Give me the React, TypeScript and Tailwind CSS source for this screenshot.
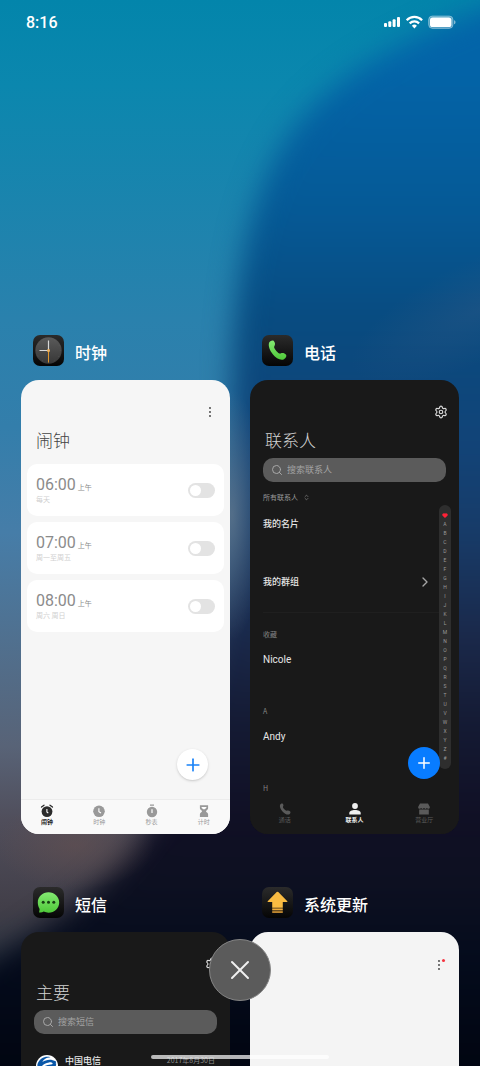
import React from 'react';
import { ChevronRight, ChevronsUpDown, Plus, Search, Settings, X } from 'lucide-react';

interface Alarm {
  time: string;
  repeat: string;
}

const alarms: Alarm[] = [
  { time: '06:00', repeat: '每天' },
  { time: '07:00', repeat: '周一至周五' },
  { time: '08:00', repeat: '周六 周日' },
];

const contactGroups = [
  { title: '收藏', names: ['Nicole'] },
  { title: 'A', names: ['Andy'] },
  { title: 'H', names: [] },
];

const letters = 'ABCDEFGHIJKLMNOPQRSTUVWXYZ#'.split('');

const Wallpaper = () => (
  <svg
    className="absolute inset-0 h-full w-full"
    viewBox="0 0 480 1066"
    preserveAspectRatio="none"
    aria-hidden="true"
  >
    <defs>
      <linearGradient id="sky" gradientUnits="userSpaceOnUse" x1="0" y1="0" x2="0" y2="1066">
        <stop offset="0" stopColor="#0385ab" />
        <stop offset="0.08" stopColor="#0b87ae" />
        <stop offset="0.3" stopColor="#2a81ad" />
        <stop offset="0.4" stopColor="#337eab" />
        <stop offset="0.5" stopColor="#467da8" />
        <stop offset="0.6" stopColor="#50708f" />
        <stop offset="0.7" stopColor="#586377" />
        <stop offset="0.77" stopColor="#504e5b" />
        <stop offset="0.85" stopColor="#423f49" />
        <stop offset="0.9" stopColor="#2f3643" />
        <stop offset="1" stopColor="#111827" />
      </linearGradient>
      <linearGradient id="deep" gradientUnits="userSpaceOnUse" x1="0" y1="0" x2="0" y2="1066">
        <stop offset="0.06" stopColor="#0364a8" />
        <stop offset="0.19" stopColor="#055a97" />
        <stop offset="0.3" stopColor="#084b80" />
        <stop offset="0.42" stopColor="#124377" />
        <stop offset="0.5" stopColor="#173b68" />
        <stop offset="0.6" stopColor="#1a2849" />
        <stop offset="0.68" stopColor="#141a33" />
        <stop offset="0.77" stopColor="#100f24" />
        <stop offset="0.83" stopColor="#0d1021" />
        <stop offset="0.9" stopColor="#040b1c" />
        <stop offset="1" stopColor="#010511" />
      </linearGradient>
      <radialGradient id="glow">
        <stop offset="0" stopColor="#66798c" stopOpacity="0.7" />
        <stop offset="1" stopColor="#66798c" stopOpacity="0" />
      </radialGradient>
      <radialGradient id="ember">
        <stop offset="0" stopColor="#66504f" stopOpacity="0.55" />
        <stop offset="1" stopColor="#66504f" stopOpacity="0" />
      </radialGradient>
      <radialGradient id="streak">
        <stop offset="0" stopColor="#3d5e88" stopOpacity="0.3" />
        <stop offset="1" stopColor="#3d5e88" stopOpacity="0" />
      </radialGradient>
      <filter
        id="soft"
        filterUnits="userSpaceOnUse"
        x="-150"
        y="-100"
        width="800"
        height="1300"
        colorInterpolationFilters="sRGB"
      >
        <feGaussianBlur stdDeviation="14" />
      </filter>
    </defs>
    <rect width="480" height="1066" fill="url(#sky)" />
    <path
      d="M640 -40C430 18 330 66 282 146C245 206 234 290 232 380C232 520 215 700 158 810C126 866 76 920 -100 1010V1160H640Z"
      fill="url(#deep)"
      filter="url(#soft)"
    />
    <ellipse cx="232" cy="515" rx="32" ry="125" fill="url(#glow)" />
    <ellipse cx="75" cy="845" rx="80" ry="45" fill="url(#ember)" />
    <ellipse cx="480" cy="310" rx="140" ry="50" fill="url(#streak)" transform="rotate(-25 480 310)" />
  </svg>
);

const StatusBar = () => (
  <header className="flex h-11 items-center justify-between pr-6 pl-[26px] text-white">
    <time className="pt-0.5 font-['Roboto',sans-serif] text-base font-medium">8:16</time>
    <svg className="h-[14px] w-[72px]" viewBox="0 0 72 14" fill="currentColor" aria-hidden="true">
      <rect x="0" y="8" width="3" height="4" rx="1" />
      <rect x="4.3" y="6.3" width="3" height="5.7" rx="1" />
      <rect x="8.6" y="4.3" width="3" height="7.7" rx="1" />
      <rect x="13" y="2" width="3" height="10" rx="1" />
      <g fill="none" stroke="currentColor" strokeWidth="2.2">
        <path d="M22.7 5.2C27 .7 33.8 .7 38.1 5.2" />
        <path d="M25.7 8.4C28.4 5.8 32.4 5.8 35.1 8.4" />
      </g>
      <path d="M27.9 10.8C29.5 9.2 31.3 9.2 32.9 10.8L30.4 13.4Z" />
      <rect x="44.6" y="1" width="24.4" height="12.4" rx="3.8" fill="#fff" fillOpacity="0.3" stroke="#fff" strokeOpacity="0.35" />
      <rect x="46" y="2.4" width="21.4" height="9.6" rx="2.6" />
      <path d="M70 5.2C72 5.8 72 8.6 70 9.2Z" opacity="0.5" />
    </svg>
  </header>
);

const AppIcon = ({ children }: { children: React.ReactNode }) => (
  <svg className="size-[31px] shrink-0" viewBox="0 0 31 31" aria-hidden="true">
    <defs>
      <linearGradient id="tile" x1="0" y1="0" x2="0" y2="1">
        <stop offset="0" stopColor="#2b2b2b" />
        <stop offset="1" stopColor="#050505" />
      </linearGradient>
      <linearGradient id="green" x1="0" y1="0" x2="0" y2="1">
        <stop offset="0" stopColor="#84ea72" />
        <stop offset="1" stopColor="#4fc839" />
      </linearGradient>
      <linearGradient id="dial" x1="0" y1="0" x2="0" y2="1">
        <stop offset="0" stopColor="#5a5a5a" />
        <stop offset="1" stopColor="#373737" />
      </linearGradient>
    </defs>
    <rect width="31" height="31" rx="7" fill="url(#tile)" />
    {children}
  </svg>
);

const ClockAppIcon = () => (
  <AppIcon>
    <circle cx="15.5" cy="15.5" r="13.2" fill="url(#dial)" />
    <circle cx="15.5" cy="15.5" r="11.8" fill="none" stroke="#6a6a6a" strokeWidth="0.8" strokeDasharray="0.5 5.68" />
    <path d="M15.5 15.5V5.5M15.5 15.5H6.5" stroke="#d8d8d8" strokeWidth="1.2" />
    <path d="M15.5 15V27.5" stroke="#e0962c" strokeWidth="1" />
    <circle cx="15.5" cy="15.5" r="1.5" fill="#f3b45c" />
  </AppIcon>
);

const PhoneAppIcon = () => (
  <AppIcon>
    <path
      d="M7 8C7.5 6.2 10.5 4.8 11.8 6C13.2 7.4 13.5 9.8 12.3 11.3C11.6 12.3 12.8 14.3 14.3 15.9C15.9 17.6 17.6 19 18.7 18.5C20.4 17.6 22.8 18.2 24 19.7C25 21.1 23.5 23.7 21.6 24.4C18.2 25.6 13.8 22.9 10.8 19.2C7.9 15.6 6.1 11.4 7 8Z"
      fill="url(#green)"
    />
  </AppIcon>
);

const MessageAppIcon = () => (
  <AppIcon>
    <path
      d="M15.5 5.2C21.5 5.2 26.2 9.7 26.2 15.4C26.2 21.2 21.5 25.7 15.5 25.7C13.8 25.7 12.2 25.2 10.7 24.5C9.5 25.5 7.9 25.8 6.3 25.5C5.8 25.3 6.6 23.9 6.6 22C5.5 20.1 4.8 17.8 4.8 15.4C4.8 9.7 9.5 5.2 15.5 5.2Z"
      fill="url(#green)"
    />
    <g fill="#173f12">
      <circle cx="10.2" cy="15.3" r="1.5" />
      <circle cx="15.5" cy="15.3" r="1.5" />
      <circle cx="20.8" cy="15.3" r="1.5" />
    </g>
  </AppIcon>
);

const UpdateAppIcon = () => (
  <AppIcon>
    <path d="M14.7 5.1Q15.5 4.4 16.3 5.1L25.3 14.2Q25.8 15 25 15H20.8V20.8H10.2V15H6Q5.2 15 5.7 14.2Z" fill="#f9bb42" />
    <path d="M10.2 21.4H20.8V23.4H10.2Z" fill="#f0ac3a" />
    <path d="M10.2 24.1H20.8V26H10.2Z" fill="#bd8630" />
  </AppIcon>
);

interface TaskProps {
  icon: React.ReactNode;
  name: string;
  cardClass: string;
  children: React.ReactNode;
}

const Task = ({ icon, name, cardClass, children }: TaskProps) => (
  <section>
    <div className="mb-[14px] flex items-center gap-[11px] pl-3">
      {icon}
      <h2 className="pt-[3px] text-base leading-6 font-medium text-white">{name}</h2>
    </div>
    <div className={`flex h-[454px] flex-col overflow-hidden rounded-[18px] ${cardClass}`}>{children}</div>
  </section>
);

const MoreIcon = () => (
  <svg className="h-3 w-1" viewBox="0 0 4 12" fill="#3a3a3a">
    <circle cx="2" cy="2" r="0.9" />
    <circle cx="2" cy="6" r="0.9" />
    <circle cx="2" cy="10" r="0.9" />
  </svg>
);

const SettingsButton = () => (
  <div className="flex h-10 shrink-0 justify-end pt-[25px] pr-[11px]">
    <button type="button" aria-label="设置" className="h-[14px]">
      <Settings className="size-[14px] text-[#d8d8d8]" strokeWidth={2} />
    </button>
  </div>
);

const SearchBox = ({ placeholder }: { placeholder: string }) => (
  <label className="mx-[13px] mt-1.5 flex h-6 shrink-0 items-center gap-1 rounded-[10px] bg-[#5b5b5b] px-2">
    <Search className="size-3 text-[#a8a8a8]" strokeWidth={2} />
    <input
      type="search"
      aria-label={placeholder}
      placeholder={placeholder}
      className="min-w-0 flex-1 bg-transparent text-[9px] leading-4 text-white outline-none placeholder:text-[#a3a3a3]"
    />
  </label>
);

interface TabProps {
  label: string;
  className: string;
  children: React.ReactNode;
}

const Tab = ({ label, className, children }: TabProps) => (
  <button type="button" className={`flex flex-1 flex-col items-center text-[6px] leading-2 ${className}`}>
    <svg className="size-[14px]" viewBox="0 0 14 14" fill="currentColor" aria-hidden="true">
      {children}
    </svg>
    {label}
  </button>
);

const ClockScreen = () => (
  <>
    <div className="flex h-10 shrink-0 justify-end pt-[26px] pr-[18px]">
      <button type="button" aria-label="更多" className="h-3"><MoreIcon /></button>
    </div>
    <h3 className="mt-2 h-6 shrink-0 pl-[15px] text-[17px] leading-6 font-light text-[#444]">闹钟</h3>
    <ul className="mx-1.5 mt-3 flex flex-1 flex-col gap-[6px]">
      {alarms.map((alarm) => (
        <li key={alarm.time} className="rounded-[10px] bg-white">
          <label className="flex h-[52px] items-center justify-between px-[9px]">
            <span>
              <span className="flex items-baseline gap-[2px] leading-4 text-[#8b8b8b]">
                <span className="font-['Roboto',sans-serif] text-base leading-4">{alarm.time}</span>
                <span className="text-[7px]">上午</span>
              </span>
              <span className="block text-[7px] leading-[9px] text-[#d0d0d0]">{alarm.repeat}</span>
            </span>
            <input
              type="checkbox"
              className="h-[15px] w-[27px] appearance-none rounded-full bg-[#e3e3e3] before:m-[2px] before:block before:size-[11px] before:rounded-full before:bg-white before:content-['']"
            />
          </label>
        </li>
      ))}
    </ul>
    <button
      type="button"
      aria-label="添加闹钟"
      className="mr-[22px] mb-[19px] flex size-[31px] shrink-0 items-center justify-center self-end rounded-full bg-white text-[#1a82f7] shadow-sm shadow-black/15"
    >
      <Plus className="size-5" strokeWidth={2} />
    </button>
    <nav className="flex h-[35px] shrink-0 border-t border-[#ececec] bg-[#f9f9f9] pt-1">
      <Tab label="闹钟" className="font-bold text-[#2b2b2b]">
        <circle cx="7" cy="7.6" r="5.4" />
        <path d="M1.5 3L4 1.2M12.5 3L10 1.2" stroke="currentColor" strokeWidth="1.3" strokeLinecap="round" />
        <path d="M6.9 5V8L8.3 9.2" stroke="#fff" strokeWidth="1.1" fill="none" />
      </Tab>
      <Tab label="时钟" className="text-[#999]">
        <circle cx="7" cy="7.3" r="5.8" />
        <path d="M6.9 4.3V7.6L9 9" stroke="#fff" strokeWidth="1.1" fill="none" />
      </Tab>
      <Tab label="秒表" className="text-[#999]">
        <circle cx="7" cy="8" r="5.2" />
        <path d="M5 1.2H9" stroke="currentColor" strokeWidth="1.3" />
        <path d="M7 5.3V9" stroke="#fff" strokeWidth="1.2" />
      </Tab>
      <Tab label="计时" className="text-[#999]">
        <path d="M2.9 1.2H11.1V4.2C11.1 5.8 9 6.3 9 7.2S11.1 8.7 11.1 10.2V13H2.9V10.2C2.9 8.7 5 8.2 5 7.2S2.9 5.8 2.9 4.2Z" />
        <path d="M4.5 3H9.5C9.5 4.4 8.2 4.8 7 5.6C5.8 4.8 4.5 4.4 4.5 3Z" fill="#fff" />
      </Tab>
    </nav>
  </>
);

const ContactsScreen = () => (
  <>
    <SettingsButton />
    <h3 className="mt-2 h-6 shrink-0 pl-[15px] text-[17px] leading-6 font-light text-[#d2d2d2]">联系人</h3>
    <SearchBox placeholder="搜索联系人" />
    <button type="button" className="mt-[7px] flex h-4 shrink-0 items-center gap-[5px] pl-[13px] text-[7px] leading-4 text-[#9a9a9a]">
      所有联系人
      <ChevronsUpDown className="size-[7px]" />
    </button>
    <div className="flex min-h-0 flex-1 items-start">
      <div className="flex-1 pl-[13px]">
        <p className="flex h-[38px] items-center text-[9px] font-medium text-[#e6e6e6]">我的名片</p>
        <button type="button" className="mt-5 flex h-[38px] w-full items-center justify-between pr-1.5 text-[9px] font-medium text-[#e6e6e6]">
          我的群组
          <ChevronRight className="size-4 text-[#a5a5a5]" strokeWidth={2} />
        </button>
        <div className="mt-[11px] mb-2 border-t border-[#1f1f1f]" />
        {contactGroups.map((group) => (
          <div key={group.title} className="mb-[25px]">
            <h4 className="h-[26px] text-[7px] leading-[26px] text-[#838383]">{group.title}</h4>
            {group.names.map((name) => (
              <p key={name} className="h-[26px] font-['Roboto',sans-serif] text-[10px] leading-[26px] text-[#e6e6e6]">{name}</p>
            ))}
          </div>
        ))}
      </div>
      <ol className="mr-2 flex w-3 flex-col items-center rounded-full bg-[#2e2e2e] py-[6px] font-['Roboto',sans-serif] text-[5px] leading-[9px] text-[#9a9a9a]">
        <li className="flex h-[9px] items-center">
          <svg className="h-[5px] w-[6px]" viewBox="0 0 6 5" fill="#ff2136" aria-label="收藏">
            <path d="M3 5L.6 2.800C-.6 1.300 1.600-.8 3 .7C4.400-.8 6.600 1.300 5.400 2.800Z" />
          </svg>
        </li>
        {letters.map((letter) => (
          <li key={letter} className="h-[9px]">{letter}</li>
        ))}
      </ol>
    </div>
    <button
      type="button"
      aria-label="新建联系人"
      className="absolute right-[19px] bottom-[55px] flex size-8 items-center justify-center rounded-full bg-[#087cff] text-white"
    >
      <Plus className="size-[18px]" strokeWidth={2} />
    </button>
    <nav className="flex h-[35px] shrink-0 bg-[#191919] pt-[3px]">
      <Tab label="通话" className="text-[#5a5a5a]">
        <path d="M2 3C2.3 1.7 4 1 4.8 1.7C5.6 2.6 5.7 3.7 5 4.6C4.6 5.3 5.3 6.3 6.3 7.3C7.2 8.2 8.2 9 8.9 8.7C9.9 8.2 11.3 8.6 12.2 9.5C13 10.5 12.1 12 11 12.4C9 13 6.5 11.6 4.5 9.4C2.5 7.1 1.5 4.8 2 3Z" />
      </Tab>
      <Tab label="联系人" className="font-bold text-[#efefef]">
        <circle cx="7" cy="4" r="2.9" />
        <path d="M1.3 12.5V11C1.3 8.9 3.8 8 7 8S12.7 8.9 12.7 11V12.5Z" />
      </Tab>
      <Tab label="营业厅" className="text-[#5a5a5a]">
        <path d="M3 1.5H11L12.9 5C12.9 7.3 10.3 7.3 10 5.8C9.5 7.3 7.5 7.3 7 5.8C6.5 7.3 4.5 7.3 4 5.8C3.7 7.3 1.1 7.3 1.1 5Z" />
        <path d="M2.2 7.5H11.8V12.5H2.2Z" />
      </Tab>
    </nav>
  </>
);

const MessagesScreen = () => (
  <>
    <SettingsButton />
    <h3 className="mt-2 h-6 shrink-0 pl-[15px] text-[17px] leading-6 font-light text-[#d2d2d2]">主要</h3>
    <SearchBox placeholder="搜索短信" />
    <article className="mt-[21px] flex items-start gap-[7px] px-[15px]">
      <svg className="size-[22px]" viewBox="0 0 22 22" aria-hidden="true">
        <circle cx="11" cy="11" r="11" fill="#fff" />
        <path d="M1.5 9C4 3 9 .8 14.5 2.2C10 2.6 7 4.8 6.5 7C10 4.5 15 3.6 20 6.5C20.7 7.7 18.5 10 15.5 10.6C18 8.4 16 7 13 7.4C8 8 5 11 4 15C2 13.5 1 11.5 1.5 9Z" fill="#0a57a8" />
        <path d="M7 12C11 9 17 10 20 8C21 13 16 14 12 14C9 15 8 18 12 20C6 19.5 5 15 7 12Z" fill="#0a57a8" />
      </svg>
      <h4 className="flex-1 text-[9px] leading-3 font-medium text-[#e6e6e6]">中国电信</h4>
      <time className="text-[7px] leading-[10px] text-[#8c8c8c]">2017年8月30日</time>
    </article>
  </>
);

const UpdateScreen = () => (
  <div className="flex justify-end pt-[27px] pr-[18px]">
    <button type="button" aria-label="更多" className="relative h-3">
      <MoreIcon />
      <span className="absolute top-0 left-[5px] size-[3px] rounded-full bg-[#f5333f]" />
    </button>
  </div>
);

export default function App() {
  return (
    <div className="relative h-screen overflow-hidden bg-[#010511] font-['Noto_Sans_CJK_SC',sans-serif]">
      <Wallpaper />
      <div className="relative">
        <StatusBar />
        <main className="mt-[291px] grid grid-cols-2 gap-x-5 gap-y-[53px] px-[21px]">
          <Task icon={<ClockAppIcon />} name="时钟" cardClass="bg-[#f6f6f6]">
            <ClockScreen />
          </Task>
          <Task icon={<PhoneAppIcon />} name="电话" cardClass="relative bg-[#191919]">
            <ContactsScreen />
          </Task>
          <Task icon={<MessageAppIcon />} name="短信" cardClass="bg-[#191919]">
            <MessagesScreen />
          </Task>
          <Task icon={<UpdateAppIcon />} name="系统更新" cardClass="bg-[#f4f4f4]">
            <UpdateScreen />
          </Task>
        </main>
      </div>
      <div className="pointer-events-none absolute inset-x-0 bottom-[65px] flex justify-center">
        <button
          type="button"
          aria-label="关闭全部"
          className="pointer-events-auto flex size-[62px] items-center justify-center rounded-full border border-[#858585] bg-[#5b5b5b] text-[#f0f0f0]"
        >
          <X className="size-8" strokeWidth={1.5} />
        </button>
      </div>
      <div className="absolute inset-x-0 bottom-[7px] mx-auto h-1 w-[178px] rounded-full bg-white/70" />
    </div>
  );
}
